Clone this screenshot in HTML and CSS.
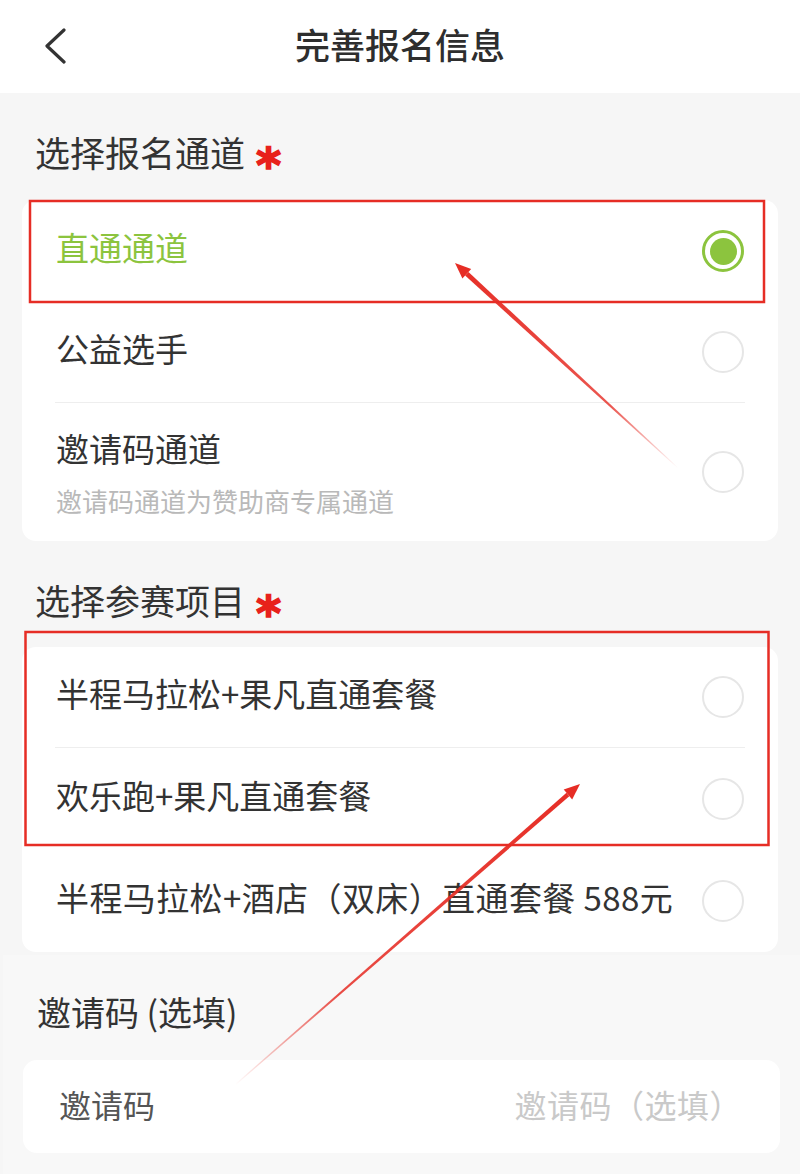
FILE: index.html
```html
<!DOCTYPE html>
<html lang="zh-CN">
<head>
<meta charset="utf-8">
<title>完善报名信息</title>
<link rel="stylesheet" href="styles.css">
</head>
<body>
<header class="topbar">
  <span class="back" aria-label="返回">
    <svg width="24" height="36" viewBox="0 0 24 36"><path d="M21 2 L4 18 L21 34" fill="none" stroke="#333" stroke-width="3.2" stroke-linecap="round" stroke-linejoin="round"/></svg>
  </span>
  <h1 class="topbar-title">完善报名信息</h1>
  <span></span>
</header>

<main>
  <section class="group">
    <h2 class="group-title">选择报名通道<span class="req">*</span></h2>
    <div class="card">
      <div class="option option--active row-102">
        <div class="option-text"><div class="option-label">直通通道</div></div>
        <span class="radio radio--on"></span>
      </div>
      <div class="option option--sep row-100">
        <div class="option-text"><div class="option-label">公益选手</div></div>
        <span class="radio"></span>
      </div>
      <div class="option row-138">
        <div class="option-text option-text--tall">
          <div class="option-label">邀请码通道</div>
          <div class="option-sub">邀请码通道为赞助商专属通道</div>
        </div>
        <span class="radio"></span>
      </div>
    </div>
  </section>

  <section class="group">
    <h2 class="group-title">选择参赛项目<span class="req">*</span></h2>
    <div class="card">
      <div class="option option--sep row-100">
        <div class="option-text"><div class="option-label">半程马拉松+果凡直通套餐</div></div>
        <span class="radio"></span>
      </div>
      <div class="option row-102">
        <div class="option-text"><div class="option-label">欢乐跑+果凡直通套餐</div></div>
        <span class="radio"></span>
      </div>
      <div class="option row-102">
        <div class="option-text"><div class="option-label option-label--wide">半程马拉松+酒店（双床）直通套餐 588元</div></div>
        <span class="radio"></span>
      </div>
    </div>
  </section>

  <section class="extra">
    <h2 class="extra-title">邀请码 (选填)</h2>
    <div class="input-card">
      <span class="input-label">邀请码</span>
      <span class="input-placeholder">邀请码（选填）</span>
    </div>
  </section>
</main>

<svg class="annotations" width="800" height="1174" viewBox="0 0 800 1174" aria-hidden="true">
  <defs>
    <linearGradient id="fade1" gradientUnits="userSpaceOnUse" x1="678" y1="468" x2="455" y2="263">
      <stop offset="0" stop-color="#e62d25" stop-opacity="0"/>
      <stop offset="0.3" stop-color="#e62d25" stop-opacity="0.8"/>
      <stop offset="1" stop-color="#e62d25" stop-opacity="1"/>
    </linearGradient>
    <linearGradient id="fade2" gradientUnits="userSpaceOnUse" x1="235" y1="1085" x2="580" y2="784">
      <stop offset="0" stop-color="#e62d25" stop-opacity="0"/>
      <stop offset="0.3" stop-color="#e62d25" stop-opacity="0.85"/>
      <stop offset="1" stop-color="#e62d25" stop-opacity="1"/>
    </linearGradient>
  </defs>
  <rect x="30" y="201" width="734" height="101" fill="none" stroke="#e62d25" stroke-width="2.5"/>
  <rect x="25.5" y="632" width="743" height="213" fill="none" stroke="#e62d25" stroke-width="2.5"/>

  <polygon points="678.34,467.64 677.66,468.36 465.1,275.6 468.5,272.0" fill="url(#fade1)"/>
  <polygon points="455,263 471.2,269.0 462.4,278.6" fill="#e62d25"/>

  <polygon points="235.33,1085.38 234.67,1084.62 566.5,792.7 569.3,796.3" fill="url(#fade2)"/>
  <polygon points="580,784 572.2,799.4 563.7,789.6" fill="#e62d25"/>
</svg>
</body>
</html>
```

FILE: styles.css
```css
html, body {
  margin: 0;
  padding: 0;
}

body {
  position: relative;
  width: 800px;
  min-height: 1174px;
  background: #f6f6f6;
  color: #333;
  font-family: "Noto Sans CJK SC", "Noto Sans", sans-serif;
  overflow: hidden;
}

.topbar {
  height: 93px;
  background: #fff;
  display: grid;
  grid-template-columns: 1fr auto 1fr;
  align-items: center;
}

.back {
  padding-left: 43px;
  display: flex;
  align-items: center;
  height: 36px;
  padding-bottom: 2px;
}

.topbar-title {
  margin: 0;
  font-size: 35px;
  font-weight: 500;
  line-height: 48px;
  color: #2e2e2e;
  padding-bottom: 6px;
}

main {
  display: block;
}

.group-title {
  margin: 0;
  padding: 35px 0 0 35px;
  font-size: 35px;
  font-weight: 400;
  line-height: 48px;
  height: 48px;
  color: #333;
  margin-bottom: 24px;
}

.group + .group .group-title {
  margin-bottom: 23px;
}

.req {
  display: inline-block;
  margin-left: 11px;
  color: #e8211b;
  font-family: "DejaVu Sans", sans-serif;
  font-weight: bold;
  font-size: 48px;
  line-height: 1;
  vertical-align: -15px;
  -webkit-text-stroke: 1.6px #e8211b;
}

.card {
  margin: 0 22px;
  background: #fff;
  border-radius: 14px;
}

.option {
  position: relative;
  display: flex;
  align-items: center;
  justify-content: space-between;
  padding: 0 34px;
}

.row-100 { height: 100px; }
.row-102 { height: 102px; }
.row-138 { height: 138px; }

.option--sep {
  border-bottom: 1px solid transparent;
}

.option--sep::after {
  content: "";
  position: absolute;
  left: 33px;
  right: 33px;
  bottom: -1px;
  height: 1px;
  background: #eeeeee;
}

.option-text {
  padding-bottom: 8px;
}

.option-text--tall {
  padding-bottom: 0;
}

.option-label {
  font-size: 33px;
  line-height: 46px;
  color: #333;
  white-space: nowrap;
}

.option-label--wide {
  letter-spacing: 0.4px;
}

.option--active .option-label {
  color: #8cc43e;
}

.option-sub {
  font-size: 26px;
  line-height: 36px;
  color: #b9b9b9;
  margin-top: 12px;
}

.radio {
  flex: 0 0 auto;
  width: 42px;
  height: 42px;
  box-sizing: border-box;
  border: 2px solid #e6e6e6;
  border-radius: 50%;
  display: flex;
  align-items: center;
  justify-content: center;
}

.radio--on {
  border: 3px solid #8cc43e;
}

.radio--on::after {
  content: "";
  width: 27px;
  height: 27px;
  border-radius: 50%;
  background: #8cc43e;
}

.extra {
  margin: 3px 0 0 3px;
  background: #f8f8f8;
  padding: 33px 0 21px;
}

.extra-title {
  margin: 0 0 24px;
  padding-left: 34px;
  font-size: 34px;
  font-weight: 400;
  line-height: 48px;
  color: #333;
}

.input-card {
  margin: 0 20px;
  height: 93px;
  background: #fff;
  border-radius: 14px;
  display: flex;
  align-items: center;
  justify-content: space-between;
  padding: 0 38px 6px 36px;
  box-sizing: border-box;
}

.input-label {
  font-size: 32px;
  color: #555;
}

.input-placeholder {
  font-size: 32px;
  color: #c9c9c9;
  letter-spacing: 0.5px;
}

.annotations {
  position: absolute;
  top: 0;
  left: 0;
  pointer-events: none;
}
```
